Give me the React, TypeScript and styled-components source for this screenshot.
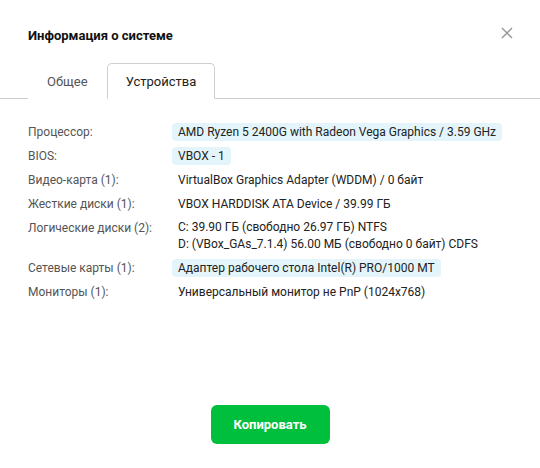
import React from "react";
import styled, { createGlobalStyle } from "styled-components";

const GlobalStyle = createGlobalStyle`
  html, body { margin: 0; padding: 0; background: #ffffff; }
  body { font-family: Roboto, "Noto Sans", sans-serif; color: #222; }
  * { box-sizing: border-box; }
`;

const Dialog = styled.div`
  width: 540px;
  height: 468px;
  display: flex;
  flex-direction: column;
  background: #fff;
`;

const Header = styled.div`
  display: flex;
  align-items: center;
  justify-content: space-between;
  padding: 26px 26px 0 28px;
  height: 63px;
  align-items: flex-start;
`;

const Title = styled.h1`
  margin: 0;
  font-size: 13px;
  font-weight: 700;
  line-height: 20px;
  color: #111;
`;

const CloseButton = styled.button`
  border: none;
  background: none;
  padding: 0;
  width: 14px;
  height: 14px;
  display: flex;
  align-items: center;
  justify-content: center;
  cursor: pointer;
`;

const TabBar = styled.div`
  display: flex;
  padding-left: 28px;
  border-bottom: 1px solid #cfcfcf;
`;

const Tab = styled.div<{ $active?: boolean }>`
  padding: 9px 18px 7px;
  font-size: 13px;
  line-height: 18px;
  color: ${(p) => (p.$active ? "#222" : "#555")};
  border: 1px solid ${(p) => (p.$active ? "#cfcfcf" : "transparent")};
  border-bottom: 1px solid ${(p) => (p.$active ? "#fff" : "transparent")};
  border-radius: 5px 5px 0 0;
  margin-bottom: -1px;
  background: #fff;
`;

const Content = styled.div`
  flex: 1;
  padding: 24px 28px 0;
  display: grid;
  grid-template-columns: 144px 1fr;
  row-gap: 6px;
  align-content: start;
  font-size: 12px;
`;

const Label = styled.div`
  color: #555;
  line-height: 18px;
`;

const Value = styled.div<{ $highlight?: boolean; $multi?: boolean }>`
  justify-self: start;
  color: #222;
  padding: 0 6px;
  line-height: ${(p) => (p.$multi ? "17px" : "18px")};
  border-radius: 4px;
  background: ${(p) => (p.$highlight ? "#e3f5fa" : "transparent")};
`;

const Footer = styled.div`
  display: flex;
  justify-content: center;
  padding-bottom: 24px;
`;

const CopyButton = styled.button`
  width: 119px;
  height: 39px;
  border: none;
  border-radius: 6px;
  background: #00bf3c;
  color: #fff;
  font-family: Roboto, "Noto Sans", sans-serif;
  font-size: 13px;
  font-weight: 700;
  cursor: pointer;
`;

const rows: { label: string; value: string[]; hl?: boolean }[] = [
  { label: "Процессор:", value: ["AMD Ryzen 5 2400G with Radeon Vega Graphics / 3.59 GHz"], hl: true },
  { label: "BIOS:", value: ["VBOX - 1"], hl: true },
  { label: "Видео-карта (1):", value: ["VirtualBox Graphics Adapter (WDDM) / 0 байт"] },
  { label: "Жесткие диски (1):", value: ["VBOX HARDDISK ATA Device / 39.99 ГБ"] },
  {
    label: "Логические диски (2):",
    value: [
      "C: 39.90 ГБ (свободно 26.97 ГБ) NTFS",
      "D: (VBox_GAs_7.1.4) 56.00 МБ (свободно 0 байт) CDFS",
    ],
  },
  { label: "Сетевые карты (1):", value: ["Адаптер рабочего стола Intel(R) PRO/1000 MT"], hl: true },
  { label: "Мониторы (1):", value: ["Универсальный монитор не PnP (1024x768)"] },
];

export default function App() {
  return (
    <>
      <GlobalStyle />
      <Dialog>
        <Header>
          <Title>Информация о системе</Title>
          <CloseButton aria-label="Закрыть">
            <svg width="12" height="12" viewBox="0 0 12 12">
              <path d="M1 1 L11 11 M11 1 L1 11" stroke="#9a9a9a" strokeWidth="1.5" />
            </svg>
          </CloseButton>
        </Header>
        <TabBar>
          <Tab>Общее</Tab>
          <Tab $active>Устройства</Tab>
        </TabBar>
        <Content>
          {rows.map((r) => (
            <React.Fragment key={r.label}>
              <Label>{r.label}</Label>
              <Value $highlight={r.hl} $multi={r.value.length > 1}>
                {r.value.map((v, i) => (
                  <div key={i}>{v}</div>
                ))}
              </Value>
            </React.Fragment>
          ))}
        </Content>
        <Footer>
          <CopyButton>Копировать</CopyButton>
        </Footer>
      </Dialog>
    </>
  );
}
